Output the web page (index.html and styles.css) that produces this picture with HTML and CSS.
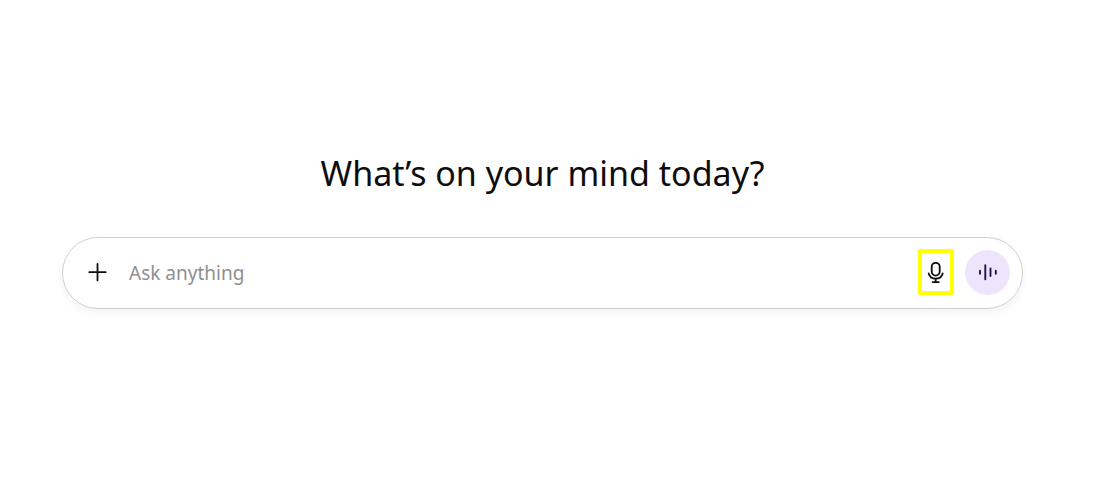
FILE: index.html
```html
<!DOCTYPE html>
<html lang="en">
<head>
<meta charset="utf-8">
<meta name="viewport" content="width=device-width, initial-scale=1">
<title>Chat</title>
<link rel="stylesheet" href="styles.css">
</head>
<body>
<main class="home">
  <h1 class="greeting">What’s on your mind today?</h1>
  <form class="composer">
    <button class="add" type="button" aria-label="Add files">
      <svg width="20" height="20" viewBox="0 0 20 20" fill="none" stroke="currentColor" stroke-width="1.8" stroke-linecap="round"><path d="M10.500 2v16.400M2.300 10.200h16.400"/></svg>
    </button>
    <input class="prompt" type="text" placeholder="Ask anything" aria-label="Ask anything">
    <button class="dictate" type="button" aria-label="Dictate">
      <svg width="20" height="24" viewBox="0 0 20 24" fill="none" stroke="currentColor" stroke-width="1.8" stroke-linecap="round"><rect x="5.700" y="2.800" width="8" height="12.800" rx="4"/><path d="M2.700 13.400C3.700 16.900 6.300 18.700 9.700 18.700s6-1.800 7-5.300M9.700 18.700v3.400M6.600 22.100h6.200"/></svg>
    </button>
    <button class="voice" type="button" aria-label="Voice mode">
      <svg width="20" height="20" viewBox="0 0 20 20" fill="none" stroke="currentColor" stroke-width="1.9" stroke-linecap="round"><path d="M2 8.800v3M7.300 3.300v14M12.500 6.500v7.600M17.800 8.800v3"/></svg>
    </button>
  </form>
</main>
</body>
</html>
```
FILE: styles.css
```css
* { box-sizing: border-box; }
body {
  margin: 0;
  background: #fff;
  color: #0d0d0d;
  font-family: "Segoe UI", "Noto Sans", "Open Sans", sans-serif;
}
.home {
  padding: 149px 85px 48px 62px;
}
.greeting {
  margin: 0 0 39px;
  font-size: 34px;
  line-height: 49px;
  font-weight: 400;
  text-align: center;
}
.composer {
  display: flex;
  align-items: center;
  padding: 11px 12px 13px 24px;
  border: 1px solid #cfcfcf;
  border-radius: 36px;
  box-shadow: 0 4px 8px rgba(0, 0, 0, 0.05);
}
button {
  display: flex;
  align-items: center;
  justify-content: center;
  padding: 0;
  border: 0;
  background: none;
  color: #0d0d0d;
}
.add {
  width: 20px;
  height: 20px;
}
.prompt {
  flex: 1;
  min-width: 0;
  margin: 0 12px 0 22px;
  padding: 2px 0 0;
  border: 0;
  outline: 0;
  background: none;
  color: #0d0d0d;
  font: 400 19px/30px "Segoe UI", "Noto Sans", "Open Sans", sans-serif;
}
.prompt::placeholder {
  color: #8f8f8f;
  opacity: 1;
}
.dictate {
  width: 36px;
  height: 46px;
  margin-right: 11px;
  border: 4px solid #ff0;
  border-radius: 2px;
}
.voice {
  width: 45px;
  height: 45px;
  border-radius: 50%;
  background: #eee5fd;
  color: #26114a;
}
```
